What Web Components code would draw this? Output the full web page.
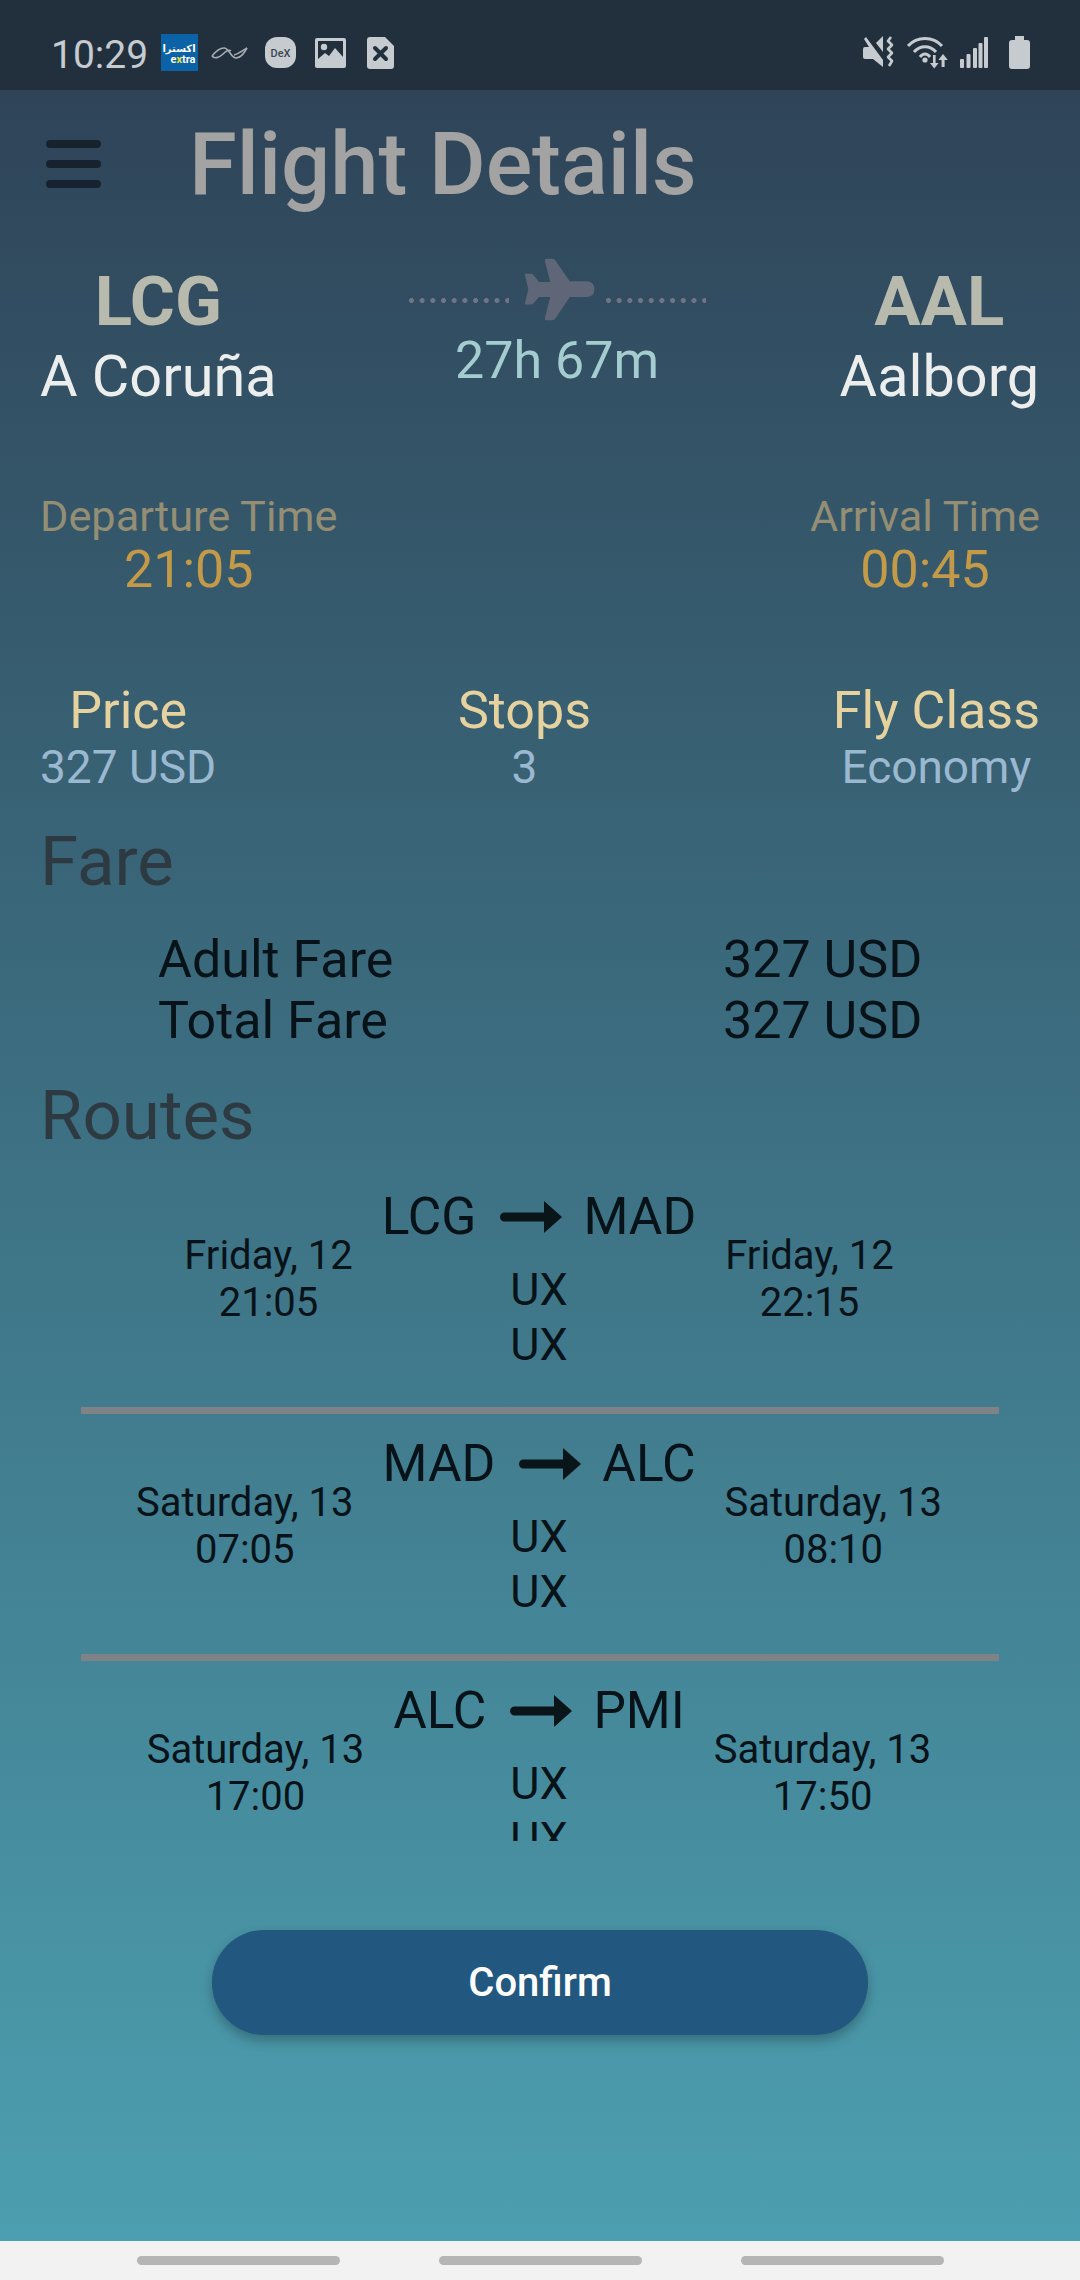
<!DOCTYPE html>
<html lang="en">
<head>
<meta charset="UTF-8">
<title>Flight Details</title>
<style>
  html, body { margin: 0; padding: 0; }
  body { font-family: Roboto, "Liberation Sans", sans-serif; }
</style>
</head>
<body>
<flight-app>
  <status-bar slot="status">10:29</status-bar>
  <app-bar>Flight Details</app-bar>
  <flight-summary></flight-summary>
  <time-row></time-row>
  <info-row></info-row>
  <section-title>Fare</section-title>
  <fare-table>
    <fare-line label="Adult Fare" value="327 USD"></fare-line>
    <fare-line label="Total Fare" value="327 USD"></fare-line>
  </fare-table>
  <section-title style="--top:25px">Routes</section-title>
  <route-list>
    <route-leg from="LCG" to="MAD" dep-day="Friday, 12" dep-time="21:05" arr-day="Friday, 12" arr-time="22:15"></route-leg>
    <route-leg from="MAD" to="ALC" dep-day="Saturday, 13" dep-time="07:05" arr-day="Saturday, 13" arr-time="08:10"></route-leg>
    <route-leg last from="ALC" to="PMI" dep-day="Saturday, 13" dep-time="17:00" arr-day="Saturday, 13" arr-time="17:50"></route-leg>
  </route-list>
  <confirm-button>Confirm</confirm-button>
  <nav-bar slot="nav"></nav-bar>
</flight-app>

<script>
// small helper so every element below is just a class + its shadow html
function shadow(el, html) {
  el.attachShadow({mode: 'open'}).innerHTML = html;
}

class FlightApp extends HTMLElement {
  constructor() {
    super();
    shadow(this, `
      <style>
        :host { display: flex; flex-direction: column; width: 1080px; height: 2280px; overflow: hidden; }
        main { flex: 1; display: flex; flex-direction: column; min-height: 0;
          background: linear-gradient(180deg, #2f4458 0%, #4c9fb0 100%); }
      </style>
      <slot name="status"></slot>
      <main><slot></slot></main>
      <slot name="nav"></slot>
    `);
  }
}

class StatusBar extends HTMLElement {
  constructor() {
    super();
    shadow(this, `
      <style>
        :host { display: flex; align-items: center; height: 90px; box-sizing: border-box; padding: 0 50px 0 51px;
          background: #22303e; color: #c6cbd0; }
        .time { font-size: 39px; line-height: 46px; margin-top: 20px; width: 110px; }
        .left { display: flex; align-items: center; flex: 1; }
        svg { display: block; }
      </style>
      <div class="left">
        <div class="time"><slot></slot></div>
        <svg width="37" height="37" viewBox="0 0 37 37" style="margin-top:15px">
          <rect width="37" height="37" fill="#0b62a6"/>
          <text x="18" y="18" font-size="10" font-weight="700" fill="#fff" text-anchor="middle" font-family="DejaVu Sans">اكسترا</text>
          <text x="22" y="29" font-size="11" font-weight="700" fill="#fff" text-anchor="middle" font-family="Roboto">e<tspan fill="#e5e23a">x</tspan>tra</text>
        </svg>
        <svg width="37" height="14" viewBox="0 0 37 14" style="margin:15px 0 0 13px" fill="none" stroke="#a5acb2" stroke-width="1.6">
          <path d="M1 10 C5 5 9 2 13 2 C18 2 20 12 25 12 C30 12 33 7 36 2"/>
          <path d="M1 10 C3 13 8 12 12 8 C15 5 18 3 20 5 M23 9 C27 8 31 5 36 2"/>
        </svg>
        <svg width="31" height="31" viewBox="0 0 31 31" style="margin:15px 0 0 17px">
          <rect width="31" height="31" rx="12" fill="#c6cbd0"/>
          <text x="15.5" y="20" font-size="11" font-weight="500" fill="#3c4650" text-anchor="middle" font-family="Roboto">DeX</text>
        </svg>
        <svg width="31" height="30" viewBox="0 0 31 30" style="margin:15px 0 0 19px">
          <rect width="31" height="30" rx="2" fill="#c6cbd0"/>
          <rect x="3" y="3" width="25" height="21" fill="#22303e"/>
          <circle cx="9" cy="9" r="3.2" fill="#c6cbd0"/>
          <path d="M3 24 L3 21 L10 15 L14 18 L20 10 L28 19 L28 24 Z" fill="#c6cbd0"/>
        </svg>
        <svg width="27" height="32" viewBox="0 0 27 32" style="margin:15px 0 0 21px">
          <path d="M3 0 H18 L27 9 V29 Q27 32 24 32 H3 Q0 32 0 29 V3 Q0 0 3 0 Z" fill="#c6cbd0"/>
          <path d="M8 11 L19 22 M19 11 L8 22" stroke="#22303e" stroke-width="4" stroke-linecap="round"/>
        </svg>
      </div>
      <svg width="31" height="32" viewBox="0 0 31 32" style="margin-top:14px" fill="#c6cbd0">
        <path d="M1 3 L3 1 L20 24 L20 31 L10 23 H2 Q0 23 0 21 V13 Q0 11 2 11 H6 Z"/>
        <path d="M13 7 L20 0 V16 Z"/>
        <path d="M28 1 L25 5 L29 9 L25 13 L29 17 L25 21 L29 25 L26 30" fill="none" stroke="#c6cbd0" stroke-width="2.6" stroke-linejoin="round"/>
      </svg>
      <svg width="42" height="33" viewBox="0 0 42 33" style="margin:14px 0 0 13px" fill="#c6cbd0">
        <path d="M1 10 C10 0 26 0 35 10" fill="none" stroke="#c6cbd0" stroke-width="3"/>
        <path d="M7 16 C13 9 23 9 29 16" fill="none" stroke="#c6cbd0" stroke-width="3"/>
        <path d="M13 21 C16 17 20 17 23 21" fill="none" stroke="#c6cbd0" stroke-width="3"/>
        <circle cx="18" cy="24" r="2.6"/>
        <path d="M26 19 h2.6 v8 h3 l-4.3 5.5 l-4.3 -5.5 h3 z"/>
        <path d="M36 18 l4.8 6 h-3.2 v7 h-3 v-7 h-3.2 z"/>
      </svg>
      <svg width="28" height="31" viewBox="0 0 28 31" style="margin:14px 0 0 11px" fill="#c6cbd0">
        <rect x="0" y="22" width="4" height="9" rx="1"/>
        <rect x="6.5" y="17" width="4" height="14" rx="1"/>
        <rect x="13" y="11" width="4" height="20" rx="1"/>
        <rect x="18.5" y="6" width="4" height="25" rx="1"/>
        <rect x="24" y="0" width="4" height="31" rx="1"/>
      </svg>
      <svg width="21" height="33" viewBox="0 0 21 33" style="margin:14px 0 0 21px" fill="#c6cbd0">
        <path d="M6 0 H15 V4 H18 Q21 4 21 7 V30 Q21 33 18 33 H3 Q0 33 0 30 V7 Q0 4 3 4 H6 Z"/>
      </svg>
    `);
  }
}

class AppBar extends HTMLElement {
  constructor() {
    super();
    shadow(this, `
      <style>
        :host { display: flex; align-items: flex-start; height: 176px; padding: 24px 0 0 46px; box-sizing: border-box; }
        .menu { width: 55px; display: flex; flex-direction: column; gap: 12px; margin-top: 26px; }
        .menu i { display: block; height: 8px; border-radius: 4px; background: #16232f; }
        h1 { margin: 0 0 0 88px; font: 500 86.8px/100px Roboto, sans-serif; color: #a3a3a3; white-space: nowrap; }
      </style>
      <div class="menu"><i></i><i></i><i></i></div>
      <h1><slot></slot></h1>
    `);
  }
}

class FlightSummary extends HTMLElement {
  constructor() {
    super();
    shadow(this, `
      <style>
        :host { display: flex; justify-content: space-between; padding: 0 41px 0 40px; height: 224px; box-sizing: border-box; }
        .city { display: flex; flex-direction: column; align-items: center; }
        .code { font: 700 69px/72px Roboto, sans-serif; color: #b9baae; }
        .name { font: 400 57.6px/66px Roboto, sans-serif; color: #eceeee; margin-top: 6px; }
        .mid { display: flex; flex-direction: column; align-items: center; width: 297px; margin-top: -8px; transform: translateX(-1px); }
        .path { display: flex; align-items: flex-end; height: 63px; }
        .dots { width: 100px; height: 5px; margin-bottom: 18px;
          background: radial-gradient(circle at 2.5px 2.5px, #6d7586 2.2px, transparent 2.7px) 0 0 / 10.7px 5px repeat-x; }
        svg { width: 71px; height: 63px; margin: 0 11px 0 15px; display: block; }
        .dur { font: 400 52px/60px Roboto, sans-serif; color: #a5cdd0; margin-top: 10px; white-space: nowrap; }
      </style>
      <div class="city"><div class="code">LCG</div><div class="name">A Coruña</div></div>
      <div class="mid">
        <div class="path">
          <div class="dots"></div>
          <svg viewBox="430 82 217 192"><path fill="#5e6678" d="M432 130 H452 Q456 130 459 134 L476 155 H510 L494 92 Q492 84 500 84 H516 Q523 84 527 91 L570 153 H620 Q645 153 645 177 Q645 201 620 201 H570 L527 265 Q523 272 516 272 H500 Q492 272 494 264 L510 201 H476 L459 220 Q456 224 452 224 H432 L443 177 Z"/></svg>
          <div class="dots"></div>
        </div>
        <div class="dur">27h 67m</div>
      </div>
      <div class="city"><div class="code">AAL</div><div class="name">Aalborg</div></div>
    `);
  }
}

class TimeRow extends HTMLElement {
  constructor() {
    super();
    shadow(this, `
      <style>
        :host { display: flex; justify-content: space-between; padding: 1px 40px 0; height: 190px; box-sizing: border-box; }
        div.col { display: flex; flex-direction: column; align-items: center; }
        .label { font: 400 43.3px/51px Roboto, sans-serif; color: #938e74; }
        .value { font: 400 52px/58px Roboto, sans-serif; color: #c39a48; margin-top: -1px; }
      </style>
      <div class="col"><div class="label">Departure Time</div><div class="value">21:05</div></div>
      <div class="col"><div class="label">Arrival Time</div><div class="value">00:45</div></div>
    `);
  }
}

class InfoRow extends HTMLElement {
  constructor() {
    super();
    shadow(this, `
      <style>
        :host { display: flex; justify-content: space-between; padding: 1px 40px 0; height: 142px; box-sizing: border-box; }
        div.col { display: flex; flex-direction: column; align-items: center; }
        .label { font: 400 52px/60px Roboto, sans-serif; color: #e6d29e; }
        .value { font: 400 46px/54px Roboto, sans-serif; color: #9ab8d0; margin-top: -1px; }
      </style>
      <div class="col"><div class="label">Price</div><div class="value">327 USD</div></div>
      <div class="col"><div class="label">Stops</div><div class="value">3</div></div>
      <div class="col"><div class="label">Fly Class</div><div class="value">Economy</div></div>
    `);
  }
}

class SectionTitle extends HTMLElement {
  constructor() {
    super();
    shadow(this, `
      <style>
        :host { display: block; padding-left: 40px; margin-top: var(--top, 0); font: 400 69px/80px Roboto, sans-serif; color: #2e3a42; }
      </style>
      <slot></slot>
    `);
  }
}

class FareTable extends HTMLElement {
  constructor() {
    super();
    shadow(this, `
      <style>
        :host { display: block; padding: 27px 0 0 158px; }
      </style>
      <slot></slot>
    `);
  }
}

class FareLine extends HTMLElement {
  constructor() {
    super();
    shadow(this, `
      <style>
        :host { display: grid; grid-template-columns: 565px auto; font: 400 52px/61px Roboto, sans-serif; color: #071318; }
      </style>
      <span>${this.getAttribute('label')}</span><span>${this.getAttribute('value')}</span>
    `);
  }
}

class RouteList extends HTMLElement {
  constructor() {
    super();
    shadow(this, `
      <style>
        :host { display: block; height: 674px; overflow: hidden; margin-top: 11px; flex: none; }
      </style>
      <slot></slot>
    `);
  }
}

class RouteLeg extends HTMLElement {
  constructor() {
    super();
    const a = n => this.getAttribute(n);
    shadow(this, `
      <style>
        :host { display: block; margin: 0 81px; height: 247px; box-sizing: border-box; padding: 20px 2px 0 0;
          border-bottom: 7px solid #7f8286; color: #071318; }
        :host([last]) { border-bottom: 0; }
        .row { display: flex; justify-content: center; gap: 29px; }
        .side { display: flex; flex-direction: column; align-items: center; font: 400 40px/47px Roboto, sans-serif; margin-top: 45px; }
        .mid { display: flex; flex-direction: column; align-items: center; }
        .title { display: flex; align-items: center; font: 400 51.5px/60px Roboto, sans-serif; }
        .title svg { display: block; width: 62px; height: 32px; margin: 0 21px 0 24px; }
        .ux { font: 400 45px/55px Roboto, sans-serif; margin-top: 15px; text-align: center; }
      </style>
      <div class="row">
        <div class="side"><span>${a('dep-day')}</span><span>${a('dep-time')}</span></div>
        <div class="mid">
          <div class="title"><span>${a('from')}</span>
            <svg viewBox="0 0 62 32"><path fill="#0a1519" d="M4.5 11.5 H44 V0 L62 16 L44 32 V20.5 H4.5 A4.5 4.5 0 0 1 4.5 11.5 Z"/></svg>
            <span>${a('to')}</span></div>
          <div class="ux">UX<br>UX</div>
        </div>
        <div class="side"><span>${a('arr-day')}</span><span>${a('arr-time')}</span></div>
      </div>
    `);
  }
}

class ConfirmButton extends HTMLElement {
  constructor() {
    super();
    shadow(this, `
      <style>
        :host { display: flex; justify-content: center; margin-top: 89px; }
        button { width: 656px; height: 105px; border: 0; border-radius: 52px; background: #22587f; color: #fff;
          font: 500 40px Roboto, sans-serif; box-shadow: 0 6px 12px rgba(0,0,0,.25); padding: 0; }
      </style>
      <button><slot></slot></button>
    `);
  }
}

class NavBar extends HTMLElement {
  constructor() {
    super();
    shadow(this, `
      <style>
        :host { display: flex; justify-content: center; gap: 99px; height: 39px; background: #f2f2f2; padding-top: 15px; box-sizing: border-box; }
        i { display: block; width: 203px; height: 9px; border-radius: 5px; background: #b5b5b5; }
      </style>
      <i></i><i></i><i></i>
    `);
  }
}

customElements.define('flight-app', FlightApp);
customElements.define('status-bar', StatusBar);
customElements.define('app-bar', AppBar);
customElements.define('flight-summary', FlightSummary);
customElements.define('time-row', TimeRow);
customElements.define('info-row', InfoRow);
customElements.define('section-title', SectionTitle);
customElements.define('fare-table', FareTable);
customElements.define('fare-line', FareLine);
customElements.define('route-list', RouteList);
customElements.define('route-leg', RouteLeg);
customElements.define('confirm-button', ConfirmButton);
customElements.define('nav-bar', NavBar);
</script>
</body>
</html>
